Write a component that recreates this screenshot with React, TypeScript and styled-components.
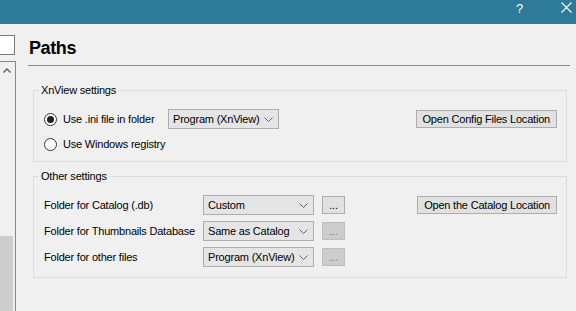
import styled, { createGlobalStyle } from "styled-components";

const GlobalStyle = createGlobalStyle`
  html, body, #root {
    margin: 0;
    height: 100%;
  }
  body {
    font-family: "Liberation Sans", Arial, sans-serif;
    font-size: 11px;
    letter-spacing: -0.2px;
    color: #000;
    background: #f0f0f0;
    overflow: hidden;
  }
`;

const Chevron = () => (
  <svg width="9" height="5" viewBox="0 0 9 5">
    <path d="M0.5 0.5 L4.5 4.5 L8.5 0.5" fill="none" stroke="#606060" strokeWidth="1" />
  </svg>
);

const Radio = ({ label, checked }: { label: string; checked?: boolean }) => (
  <RadioLabel>
    <RadioCircle>{checked && <RadioDot />}</RadioCircle>
    {label}
  </RadioLabel>
);

const Combo = ({ value }: { value: string }) => (
  <ComboBox>
    <span>{value}</span>
    <Chevron />
  </ComboBox>
);

const folders = [
  { label: "Folder for Catalog (.db)", value: "Custom", enabled: true },
  { label: "Folder for Thumbnails Database", value: "Same as Catalog", enabled: false },
  { label: "Folder for other files", value: "Program (XnView)", enabled: false },
];

const App = () => {
  return (
    <Window>
      <GlobalStyle />
      <TitleBar>
        <Help>?</Help>
        <svg width="11" height="11" viewBox="0 0 11 11">
          <path d="M0.5 0.5 L10.5 10.5 M10.5 0.5 L0.5 10.5" stroke="#fff" strokeWidth="1.1" />
        </svg>
      </TitleBar>
      <Body>
        <LeftPane>
          <SearchBox />
          <TreeList>
            <ScrollBar>
              <ScrollArrow>
                <svg width="8" height="5" viewBox="0 0 8 5">
                  <path d="M0.5 4.5 L4 1 L7.5 4.5" fill="none" stroke="#606060" strokeWidth="1.4" />
                </svg>
              </ScrollArrow>
              <ScrollTrack>
                <ScrollThumb />
              </ScrollTrack>
            </ScrollBar>
          </TreeList>
        </LeftPane>
        <Content>
          <Heading>Paths</Heading>
          <Separator />
          <Group>
            <Legend>XnView settings</Legend>
            <IniRow>
              <RadioCol>
                <Radio label="Use .ini file in folder" checked />
              </RadioCol>
              <Combo value="Program (XnView)" />
              <PushButton>Open Config Files Location</PushButton>
            </IniRow>
            <IniRow>
              <Radio label="Use Windows registry" />
            </IniRow>
          </Group>
          <Group $second>
            <Legend>Other settings</Legend>
            {folders.map((f, i) => (
              <FolderRow key={f.label}>
                <FolderLabel>{f.label}</FolderLabel>
                <Combo value={f.value} />
                <DotsButton $disabled={!f.enabled}>...</DotsButton>
                {i === 0 && <PushButton>Open the Catalog Location</PushButton>}
              </FolderRow>
            ))}
          </Group>
        </Content>
      </Body>
    </Window>
  );
};

const Window = styled.div`
  height: 100%;
  display: flex;
  flex-direction: column;
`;

const TitleBar = styled.div`
  height: 24px;
  flex: none;
  background: #2d7b98;
  display: flex;
  justify-content: flex-end;
  align-items: flex-start;
  padding: 2px 4px 0 0;
  box-sizing: border-box;
  gap: 38px;
  color: #fff;
`;

const Help = styled.span`
  font-family: "Liberation Sans", Arial, sans-serif;
  font-size: 13px;
  line-height: 13px;
`;

const Body = styled.div`
  flex: 1;
  display: flex;
  min-height: 0;
`;

const LeftPane = styled.div`
  width: 16px;
  flex: none;
  display: flex;
  flex-direction: column;
  padding-top: 11px;
  gap: 6px;
`;

const SearchBox = styled.div`
  height: 20px;
  width: 15px;
  box-sizing: border-box;
  background: #fff;
  border: 1px solid #7a7a7a;
  border-left: none;
`;

const TreeList = styled.div`
  flex: 1;
  border-top: 1px solid #828790;
  border-right: 1px solid #828790;
  display: flex;
`;

const ScrollBar = styled.div`
  width: 13px;
  display: flex;
  flex-direction: column;
`;

const ScrollArrow = styled.div`
  height: 17px;
  display: flex;
  align-items: center;
  justify-content: center;
  padding-left: 1px;
`;

const ScrollTrack = styled.div`
  flex: 1;
  display: flex;
  flex-direction: column;
  justify-content: flex-end;
`;

const ScrollThumb = styled.div`
  height: 75px;
  background: #cdcdcd;
`;

const Content = styled.div`
  flex: 1;
  padding: 0 6px 0 12px;
  display: flex;
  flex-direction: column;
`;

const Heading = styled.h1`
  margin: 13px 0 0 1px;
  font-family: "Liberation Sans", Arial, sans-serif;
  font-size: 18px;
  letter-spacing: -0.4px;
  line-height: 22px;
  font-weight: bold;
`;

const Separator = styled.div`
  height: 1px;
  margin-top: 6px;
  background: #8a8a8a;
`;

const Group = styled.fieldset<{ $second?: boolean }>`
  margin: ${(p) => (p.$second ? "7px" : "17px")} 3px 0 5px;
  padding: 12px 9px ${(p) => (p.$second ? "10px" : "7px")} 10px;
  border: 1px solid #dcdcdc;
  display: flex;
  flex-direction: column;
  gap: ${(p) => (p.$second ? "6px" : "5px")};
  min-width: 0;
`;

const Legend = styled.legend`
  margin-left: -5px;
  padding: 0 2px;
  line-height: 14px;
  font-size: 11px;
`;

const IniRow = styled.div`
  display: flex;
  align-items: center;
  height: 20px;
`;

const RadioCol = styled.div`
  width: 124px;
`;

const RadioLabel = styled.label`
  display: flex;
  align-items: center;
  gap: 6px;
  white-space: nowrap;
`;

const RadioCircle = styled.span`
  width: 13px;
  height: 13px;
  box-sizing: border-box;
  border: 1px solid #333;
  border-radius: 50%;
  background: #fff;
  display: flex;
  align-items: center;
  justify-content: center;
`;

const RadioDot = styled.span`
  width: 7px;
  height: 7px;
  border-radius: 50%;
  background: #222;
`;

const ComboBox = styled.div`
  width: 111px;
  height: 20px;
  box-sizing: border-box;
  background: #e5e5e5;
  border: 1px solid #adadad;
  display: flex;
  align-items: center;
  justify-content: space-between;
  padding: 0 5px 0 4px;
  white-space: nowrap;
`;

const PushButton = styled.div`
  margin-left: auto;
  height: 18px;
  box-sizing: border-box;
  background: #e1e1e1;
  border: 1px solid #adadad;
  padding: 0 6px;
  display: flex;
  align-items: center;
  white-space: nowrap;
`;

const FolderRow = styled.div`
  display: flex;
  align-items: center;
  height: 20px;
`;

const FolderLabel = styled.span`
  width: 159px;
  white-space: nowrap;
`;

const DotsButton = styled.div<{ $disabled?: boolean }>`
  margin-left: 8px;
  width: 23px;
  height: 18px;
  box-sizing: border-box;
  background: ${(p) => (p.$disabled ? "#cccccc" : "#e1e1e1")};
  border: 1px solid ${(p) => (p.$disabled ? "#bfbfbf" : "#adadad")};
  color: ${(p) => (p.$disabled ? "#838383" : "#000")};
  display: flex;
  align-items: center;
  justify-content: center;
  line-height: 1;
`;

export default App;
